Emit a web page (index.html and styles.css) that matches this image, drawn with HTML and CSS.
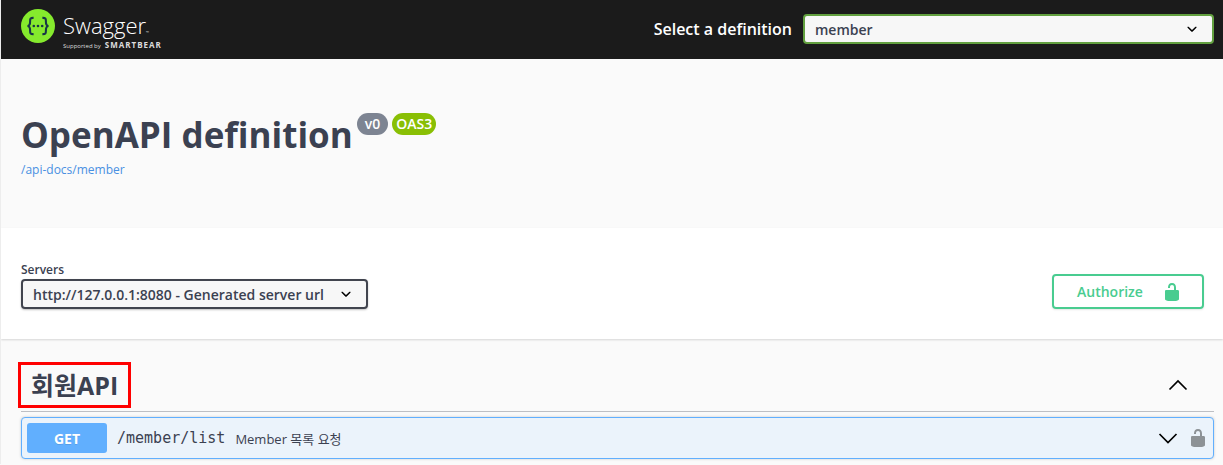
FILE: index.html
```html
<!DOCTYPE html>
<html lang="ko">
<head>
<meta charset="utf-8">
<title>Swagger UI</title>
<link rel="stylesheet" href="styles.css">
</head>
<body>
<header class="topbar">
  <a class="logo" href="#">
    <svg class="logo-mark" viewBox="0 0 34 34" aria-hidden="true">
      <circle cx="17" cy="17" r="17" fill="#85ea2d"/>
      <g fill="none" stroke="#173647" stroke-width="2.1">
        <path d="M12.6 8.900c-3-.2-3.600.8-3.500 3.200.1 3-.1 4.700-2.600 4.900 2.500.2 2.700 1.900 2.600 4.900-.1 2.400.5 3.400 3.500 3.200"/>
        <path d="M21.400 8.900c3-.2 3.600.8 3.500 3.200-.1 3 .1 4.700 2.600 4.900-2.500.2-2.700 1.900-2.600 4.900.1 2.400-.5 3.400-3.500 3.200"/>
      </g>
      <g fill="#173647"><circle cx="12.800" cy="17" r="1.300"/><circle cx="17" cy="17" r="1.300"/><circle cx="21.200" cy="17" r="1.300"/></g>
    </svg>
    <span class="logo-text">
      <span class="logo-name">Swagger<span class="logo-tm">™</span></span>
      <span class="logo-sub"><span>Supported by</span><b>SMARTBEAR</b></span>
    </span>
  </a>
  <form class="definition">
    <label for="definition">Select a definition</label>
    <select id="definition" class="select select-definition"><option>member</option></select>
  </form>
</header>
<main>
  <section class="info">
    <div class="title-row">
      <h1 class="title">OpenAPI definition</h1>
      <span class="badge">v0</span>
      <span class="badge badge-oas">OAS3</span>
    </div>
    <a class="docs-link" href="#">/api-docs/member</a>
  </section>
  <section class="scheme">
    <div class="servers">
      <label for="servers">Servers</label>
      <select id="servers" class="select select-server"><option>http://127.0.0.1:8080 - Generated server url</option></select>
    </div>
    <button class="authorize" type="button">
      <span>Authorize</span>
      <svg class="lock" viewBox="0 0 20 20" aria-hidden="true"><path d="M15.8 8H14V5.6C14 2.703 12.665 1 10 1 7.334 1 6 2.703 6 5.6V6h2v-.801C8 3.754 8.797 3 10 3c1.203 0 2 .754 2 2.199V8H4c-.553 0-1 .646-1 1.199V17c0 .549.428 1.139.951 1.307l1.197.387C5.672 18.861 6.55 19 7.1 19h5.8c.549 0 1.428-.139 1.951-.307l1.196-.387c.524-.167.953-.757.953-1.306V9.199C17 8.646 16.352 8 15.8 8z"/></svg>
    </button>
  </section>
  <section class="operations">
    <div class="tag-row">
      <h2 class="tag">회원API</h2>
      <button class="toggle" type="button" aria-label="Collapse operations">
        <svg class="chevron" viewBox="0 0 20 20" aria-hidden="true"><path d="M1.500 14.500 10 6l8.500 8.500"/></svg>
      </button>
    </div>
    <div class="opblock">
      <button class="method" type="button">GET</button>
      <a class="path" href="#">/member/list</a>
      <span class="summary">Member 목록 요청</span>
      <button class="toggle" type="button" aria-label="Expand operation">
        <svg class="chevron" viewBox="0 0 20 20" aria-hidden="true"><path d="M1.500 6 10 14.500 18.500 6"/></svg>
      </button>
      <button class="toggle" type="button" aria-label="Authorization">
        <svg class="lock lock-muted" viewBox="0 0 20 20" aria-hidden="true"><path d="M15.8 8H14V5.6C14 2.703 12.665 1 10 1 7.334 1 6 2.703 6 5.6V6h2v-.801C8 3.754 8.797 3 10 3c1.203 0 2 .754 2 2.199V8H4c-.553 0-1 .646-1 1.199V17c0 .549.428 1.139.951 1.307l1.197.387C5.672 18.861 6.55 19 7.1 19h5.8c.549 0 1.428-.139 1.951-.307l1.196-.387c.524-.167.953-.757.953-1.306V9.199C17 8.646 16.352 8 15.8 8z"/></svg>
      </button>
    </div>
  </section>
</main>
</body>
</html>
```
FILE: styles.css
```css
* { box-sizing: border-box; }

body {
  margin: 0;
  border-left: 1px solid #ededed;
  background: #fafafa;
  color: #3b4151;
  font-family: "Open Sans", "Noto Sans CJK KR", sans-serif;
  font-size: 14px;
}

h1, h2 { margin: 0; }
a { text-decoration: none; }
button, select { font-family: inherit; color: inherit; }

.topbar {
  display: flex;
  align-items: flex-start;
  justify-content: space-between;
  padding: 8px 9px 9px 20px;
  background: #1b1b1b;
  color: #fff;
}

.logo { display: flex; gap: 8px; color: #fff; }
.logo-mark { width: 34px; height: 34px; margin-top: 1px; }
.logo-text { display: flex; flex-direction: column; gap: 3px; padding-top: 4px; }
.logo-name { font-size: 22px; font-weight: 300; line-height: 26px; }
.logo-tm { font-size: 4px; line-height: 0; }
.logo-sub { display: flex; align-items: baseline; gap: 4px; font-size: 6px; line-height: 8px; color: #ddd; }
.logo-sub b { font-size: 8px; font-weight: 700; letter-spacing: 1px; }

.definition { display: flex; align-items: center; gap: 11px; padding-top: 6px; }
.definition label { font-size: 16px; font-weight: 600; line-height: 30px; }

.select {
  appearance: none;
  height: 30px;
  padding: 0 40px 0 10px;
  border: 2px solid #41444e;
  border-radius: 4px;
  background: #f7f7f7 url("data:image/svg+xml,%3Csvg xmlns='http://www.w3.org/2000/svg' viewBox='0 0 20 20'%3E%3Cpath d='M13.418 7.859c.271-.268.709-.268.978 0 .27.268.272.701 0 .969l-3.908 3.83c-.27.268-.707.268-.979 0l-3.908-3.83c-.27-.267-.27-.701 0-.969.271-.268.709-.268.978 0L10 11l3.418-3.141z'/%3E%3C/svg%3E") right 10px center / 20px no-repeat;
  box-shadow: 0 1px 2px rgba(0, 0, 0, .25);
  color: #3b4151;
  font-size: 14px;
  font-weight: 600;
}
.select-definition { width: 411px; border-color: #62a03f; box-shadow: none; }
.select-server { width: 347px; }

.info { padding: 50px 20px 49px; }
.title-row { display: flex; align-items: flex-start; gap: 4px; }
.title { font-size: 35px; font-weight: 700; line-height: 52px; }
.badge {
  margin-top: 4px;
  padding: 0 8px;
  border-radius: 11px;
  background: #7d8492;
  color: #fff;
  font-size: 14px;
  font-weight: 600;
  line-height: 22px;
}
.badge-oas { padding: 0 4px; background: #89bf04; }
.docs-link { display: block; color: #4990e2; font-size: 12px; line-height: 18px; }

.scheme {
  display: flex;
  align-items: flex-end;
  justify-content: space-between;
  padding: 33px 19px 30px 20px;
  background: #fff;
  box-shadow: 0 1px 2px rgba(0, 0, 0, .15);
}
.servers { display: flex; flex-direction: column; font-size: 12px; font-weight: 600; line-height: 18px; }
.authorize {
  display: flex;
  align-items: center;
  justify-content: space-between;
  width: 152px;
  height: 35px;
  padding: 0 20px 0 23px;
  border: 2px solid #49cc90;
  border-radius: 4px;
  background: transparent;
  box-shadow: 0 1px 2px rgba(0, 0, 0, .1);
  color: #49cc90;
  font-size: 14px;
  font-weight: 600;
}
.lock { display: block; width: 20px; height: 20px; fill: currentColor; }
.lock-muted { color: #8d9296; }

.operations { padding: 23px 9px 5px 20px; }
.tag-row {
  display: flex;
  align-items: center;
  justify-content: space-between;
  padding: 0 26px 3px 0;
  border-bottom: 1px solid #bdbfc4;
}
.tag {
  margin-left: -3px;
  padding: 0 10px;
  border: 3px solid #f00;
  font-size: 25px;
  font-weight: 700;
  line-height: 40px;
}
.toggle { padding: 0; border: 0; background: none; }
.chevron { display: block; width: 20px; height: 20px; fill: none; stroke: #000; stroke-width: 1.7; }

.opblock {
  display: flex;
  align-items: center;
  gap: 10px;
  margin-top: 5px;
  padding: 5px;
  border: 1px solid #61affe;
  border-radius: 4px;
  background: #ebf3fb;
  box-shadow: 0 0 3px rgba(0, 0, 0, .19);
}
.method {
  width: 80px;
  height: 30px;
  padding: 0;
  border: 0;
  border-radius: 3px;
  background: #61affe;
  color: #fff;
  font-size: 14px;
  font-weight: 700;
  text-shadow: 0 1px 0 rgba(0, 0, 0, .1);
}
.path { color: #3b4151; font-family: "DejaVu Sans Mono", monospace; font-size: 15px; }
.summary { flex: 1; font-size: 13px; }
```
